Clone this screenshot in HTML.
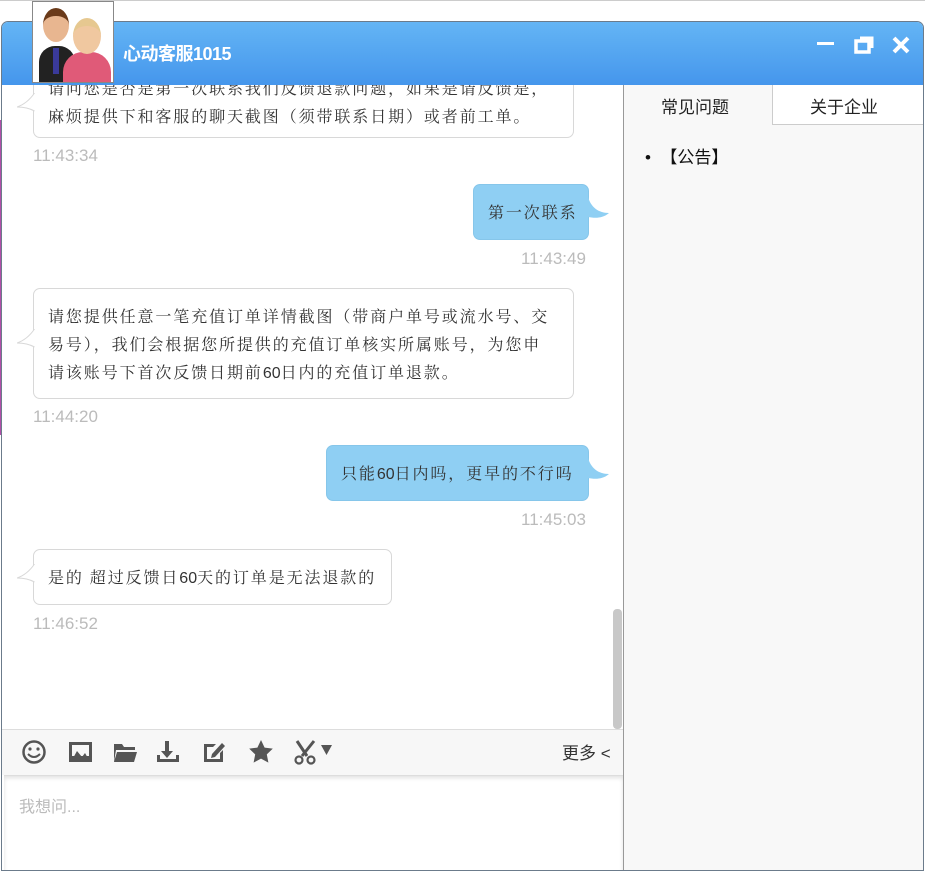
<!DOCTYPE html>
<html><head><meta charset="utf-8"><style>
*{margin:0;padding:0;box-sizing:border-box}
body{width:925px;height:864px;position:relative;background:#fff;overflow:hidden;font-family:"Liberation Sans","Noto Serif CJK SC",serif;}
.abs{position:absolute}
.win{left:1px;top:21px;width:923px;height:850px;border:1px solid #6b7b8b;border-radius:7px 7px 0 0;background:#fff;overflow:hidden}
.hdr{left:0;top:0;width:923px;height:63px;background:linear-gradient(#64b5f5,#4596ec)}
.title{left:121px;top:18px;color:#fff;font:bold 18px "Liberation Sans","Noto Sans CJK SC",sans-serif;letter-spacing:-0.5px}
.b{position:absolute;border:1px solid #d8d8d8;border-radius:7px;background:#fff;color:#333;font-size:16px;line-height:28px;padding:13px 0 13px 14px;letter-spacing:1.9px;white-space:nowrap;font-family:"Noto Serif CJK SC","Noto Serif CJK JP","Liberation Serif",serif}
.b .n{font-family:"Liberation Sans",sans-serif;letter-spacing:0}
.r{background:#8fcff3;border-color:#86c6ea}
.t{position:absolute;color:#bbb;font:17px "Liberation Sans",sans-serif;width:100px}
.tail{position:absolute}
</style></head><body>
<div class="abs" style="left:0;top:0;width:925px;height:1px;background:#ccc"></div>
<div class="abs" style="left:0;top:120px;width:2px;height:315px;background:#b04fa8"></div>
<div class="abs win">
 <div class="abs hdr"></div>
 <div class="abs title">心动客服1015</div>
 <div class="abs" style="left:815px;top:20px;width:17px;height:3px;background:#fff"></div>
 <svg class="abs" style="left:852px;top:14px" width="20" height="18"><rect x="2" y="5" width="13" height="11" fill="none" stroke="#fff" stroke-width="3.5"/><path d="M6 2 h12 v10" fill="none" stroke="#fff" stroke-width="3"/></svg>
 <svg class="abs" style="left:890px;top:14px" width="18" height="18"><path d="M2 2 L16 16 M16 2 L2 16" stroke="#fff" stroke-width="4"/></svg>
 <!-- chat -->
 <div class="abs" style="left:0;top:63px;width:621px;height:645px;overflow:hidden">
  <div class="b" style="left:31px;top:-53px;width:541px;height:106px">请问您是否是第一次联系我们反馈退款问题，如果是请反馈是，<br>请问您是否是第一次联系我们反馈退款问题，如果是请反馈是，<br>麻烦提供下和客服的聊天截图（须带联系日期）或者前工单。
   <svg class="tail" style="left:-17px;top:60px" width="18" height="22"><path d="M17.5 0 C12 8 6 12 0 14 C6 14 12 15 17.5 18" fill="#fff" stroke="#d8d8d8"/></svg></div>
  <div class="t" style="left:31px;top:61px">11:43:34</div>
  <div class="b r" style="left:471px;top:99px;width:116px;height:56px">第一次联系
   <svg class="tail" style="left:114px;top:12px" width="22" height="26"><path d="M0 0 C3 10 10 16 21 16 C14 22 6 21 0 20Z" fill="#8fcff3"/></svg></div>
  <div class="t" style="left:519px;top:164px">11:43:49</div>
  <div class="b" style="left:31px;top:203px;width:541px;height:111px">请您提供任意一笔充值订单详情截图（带商户单号或流水号、交<br>易号），我们会根据您所提供的充值订单核实所属账号，为您申<br>请该账号下首次反馈日期前<span class="n">60</span>日内的充值订单退款。
   <svg class="tail" style="left:-17px;top:40px" width="18" height="22"><path d="M17.5 0 C12 8 6 12 0 14 C6 14 12 15 17.5 18" fill="#fff" stroke="#d8d8d8"/></svg></div>
  <div class="t" style="left:31px;top:322px">11:44:20</div>
  <div class="b r" style="left:324px;top:360px;width:263px;height:56px">只能<span class="n">60</span>日内吗，更早的不行吗
   <svg class="tail" style="left:261px;top:12px" width="22" height="26"><path d="M0 0 C3 10 10 16 21 16 C14 22 6 21 0 20Z" fill="#8fcff3"/></svg></div>
  <div class="t" style="left:519px;top:425px">11:45:03</div>
  <div class="b" style="left:31px;top:464px;width:359px;height:56px">是的 超过反馈日<span class="n">60</span>天的订单是无法退款的
   <svg class="tail" style="left:-17px;top:14px" width="18" height="22"><path d="M17.5 0 C12 8 6 12 0 14 C6 14 12 15 17.5 18" fill="#fff" stroke="#d8d8d8"/></svg></div>
  <div class="t" style="left:31px;top:529px">11:46:52</div>
  <div class="abs" style="left:611px;top:524px;width:9px;height:120px;background:#c8c8c8;border-radius:4px"></div>
 </div>
 <!-- toolbar -->
 <div class="abs" style="left:0;top:707px;width:621px;height:46px;background:#f7f7f7;border-top:1px solid #ddd"></div>
 <svg class="abs" style="left:0;top:707px" width="340" height="46" viewBox="0 0 340 46" fill="#555">
  <circle cx="32" cy="23" r="10.5" fill="none" stroke="#555" stroke-width="2.5"/><circle cx="28" cy="20" r="1.6"/><circle cx="36" cy="20" r="1.6"/><path d="M26 25 Q32 31 38 25" fill="none" stroke="#555" stroke-width="2"/>
  <rect x="67" y="13" width="23" height="20" fill="#555"/><rect x="70" y="16" width="17" height="11" fill="#f7f7f7"/><path d="M70 31 L75 22 L80 28 L83 24 L87 31Z"/>
  <path d="M112 15 h8 l2 3 h11 v3 h-19 l-2 12 h-0Z M112 33 l3 -10 h20 l-3 10Z"/>
  <path d="M163 12 h4 v10 h4 l-6 7 l-6 -7 h4Z M155 26 h3 v4 h16 v-4 h3 v7 h-22Z"/>
  <path d="M202 15 h12 l-3 3 h-6 v12 h13 v-6 l3 -3 v12 h-19Z"/><path d="M210 25 l10 -11 l3 3 l-10 11 l-4 1Z"/>
  <path d="M259 11 l3.6 7.6 8.2 1 -6 5.8 1.6 8.2 -7.4 -4 -7.4 4 1.6 -8.2 -6 -5.8 8.2 -1Z"/>
  <path d="M295 12 L305 27 M312 12 L300 27" stroke="#555" stroke-width="3"/><circle cx="297" cy="31" r="3.5" fill="none" stroke="#555" stroke-width="2.2"/><circle cx="309" cy="31" r="3.5" fill="none" stroke="#555" stroke-width="2.2"/>
  <path d="M319 16 h11 l-5.5 10Z"/>
 </svg>
 <div class="abs" style="left:560px;top:717px;color:#333;font:17px 'Liberation Sans','Noto Sans CJK SC',sans-serif">更多 &lt;</div>
 <div class="abs" style="left:2px;top:753px;width:619px;height:100px;background:#fff;border-top:1px solid #ddd;box-shadow:inset 0 2px 4px rgba(0,0,0,.12)"></div>
 <div class="abs" style="left:17px;top:771px;color:#bbb;font:16px 'Liberation Sans','Noto Sans CJK SC',sans-serif">我想问...</div>
 <!-- right panel -->
 <div class="abs" style="left:621px;top:63px;width:302px;height:790px;background:#f8f8f8;border-left:1px solid #999"></div>
 <div class="abs" style="left:770px;top:63px;width:153px;height:40px;background:#fff;border-left:1px solid #ccc;border-bottom:1px solid #ccc"></div>
 <div class="abs" style="left:659px;top:71px;color:#222;font:17px 'Liberation Sans','Noto Sans CJK SC',sans-serif">常见问题</div>
 <div class="abs" style="left:808px;top:71px;color:#222;font:17px 'Liberation Sans','Noto Sans CJK SC',sans-serif">关于企业</div>
 <div class="abs" style="left:643px;top:121px;color:#111;font:17px 'Liberation Sans','Noto Sans CJK SC',sans-serif">•&nbsp;&nbsp;【公告】</div>
</div>
<!-- avatar -->
<div class="abs" style="left:32px;top:1px;width:82px;height:82px;background:#fff;border:1px solid #888;overflow:hidden">
 <div class="abs" style="left:6px;top:44px;width:36px;height:40px;background:#222;border-radius:16px 16px 0 0"></div>
 <div class="abs" style="left:20px;top:46px;width:6px;height:26px;background:#3a3a9a"></div>
 <div class="abs" style="left:10px;top:6px;width:26px;height:34px;background:#e8b690;border-radius:50%;border-top:8px solid #6a3a1a"></div>
 <div class="abs" style="left:30px;top:50px;width:48px;height:34px;background:#e05a78;border-radius:20px 20px 0 0"></div>
 <div class="abs" style="left:40px;top:16px;width:28px;height:36px;background:#f0c8a0;border-radius:50%;border-top:8px solid #e6c890"></div>
</div>
</body></html>
